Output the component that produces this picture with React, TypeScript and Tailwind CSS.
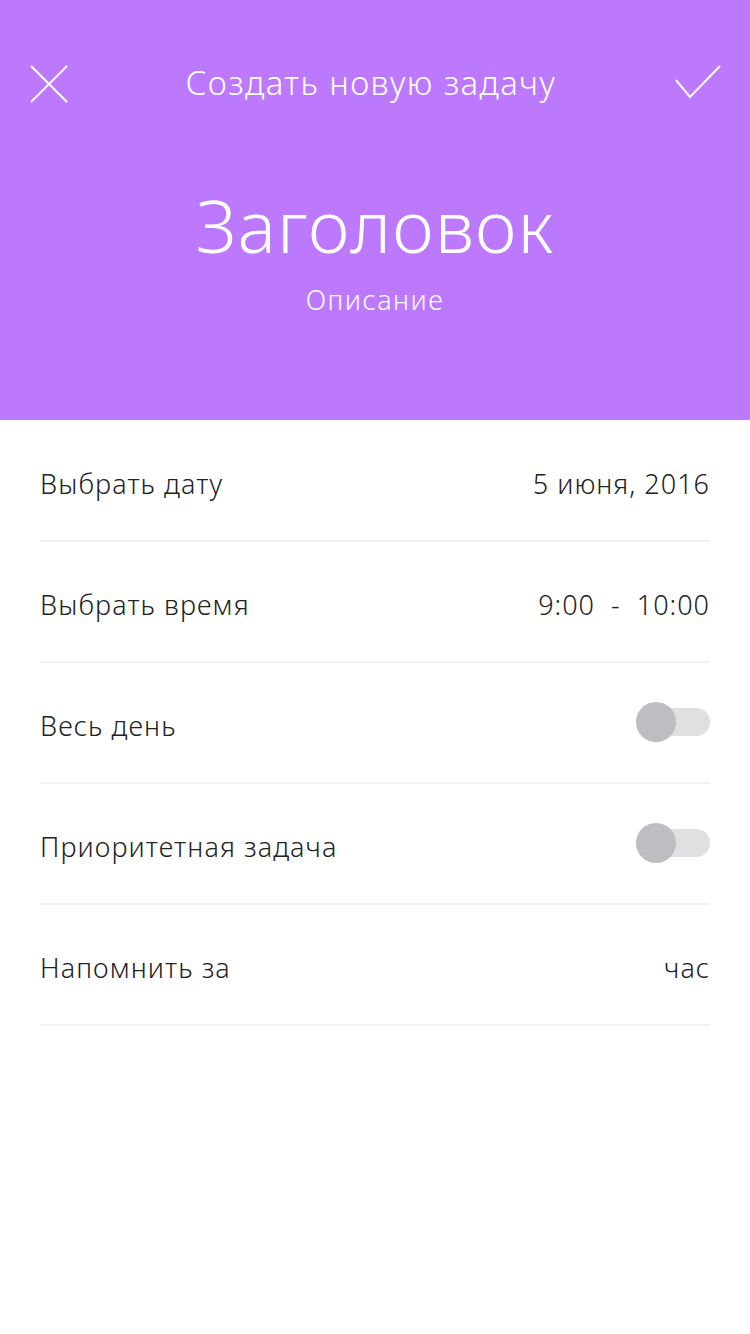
import React from "react";

const font = { fontFamily: '"Noto Sans", "Open Sans", sans-serif' };

const Toggle = () => (
  <div className="relative mb-[8px] h-[40px] w-[74px] flex items-center">
    <div className="ml-auto h-[28px] w-[60px] rounded-full bg-[#e0e0e2]" />
    <div className="absolute left-0 top-0 h-[40px] w-[40px] rounded-full bg-[#bebec2]" />
  </div>
);

const Value = ({ children }: { children: React.ReactNode }) => (
  <span className="text-[27px] tracking-[1px] text-[#222] font-light whitespace-pre">{children}</span>
);

const Row = ({ label, right }: { label: string; right: React.ReactNode }) => (
  <div className="mx-[40px] h-[121px] flex items-center justify-between border-b-2 border-[#f1f1f1] pt-[7px]">
    <span className="text-[27px] tracking-[1.1px] text-[#222] font-light">{label}</span>
    {right}
  </div>
);

export default function App() {
  return (
    <div className="w-[750px] min-h-[1334px] bg-white" style={font}>
      <div className="h-[420px] bg-[#bc79fe] text-white flex flex-col">
        <div className="h-[166px] px-[30px] flex items-start pt-[64px] justify-between">
          <svg width="38" height="38" viewBox="0 0 38 38" className="mt-[1px]">
            <path d="M1 1 L37 37 M37 1 L1 37" stroke="white" strokeWidth="2" fill="none" />
          </svg>
          <span className="text-[33px] font-light tracking-[1.4px] leading-[38px]">Создать новую задачу</span>
          <svg width="48" height="34" viewBox="0 0 48 34" className="mt-[1px] -mr-[2px]">
            <path d="M2 15 L16 32 L46 1" stroke="white" strokeWidth="2" fill="none" />
          </svg>
        </div>
        <div className="flex flex-col items-center pt-[9px]">
          <h1 className="text-[72px] font-light leading-[100px] tracking-[1px]">Заголовок</h1>
          <p className="mt-[8px] text-[27px] font-light tracking-[1.5px] leading-[34px]">Описание</p>
        </div>
      </div>
      <div className="pt-[1px]">
        <Row label="Выбрать дату" right={<Value>5 июня, 2016</Value>} />
        <Row label="Выбрать время" right={<Value>9:00  -  10:00</Value>} />
        <Row label="Весь день" right={<Toggle />} />
        <Row label="Приоритетная задача" right={<Toggle />} />
        <Row label="Напомнить за" right={<Value>час</Value>} />
      </div>
    </div>
  );
}
